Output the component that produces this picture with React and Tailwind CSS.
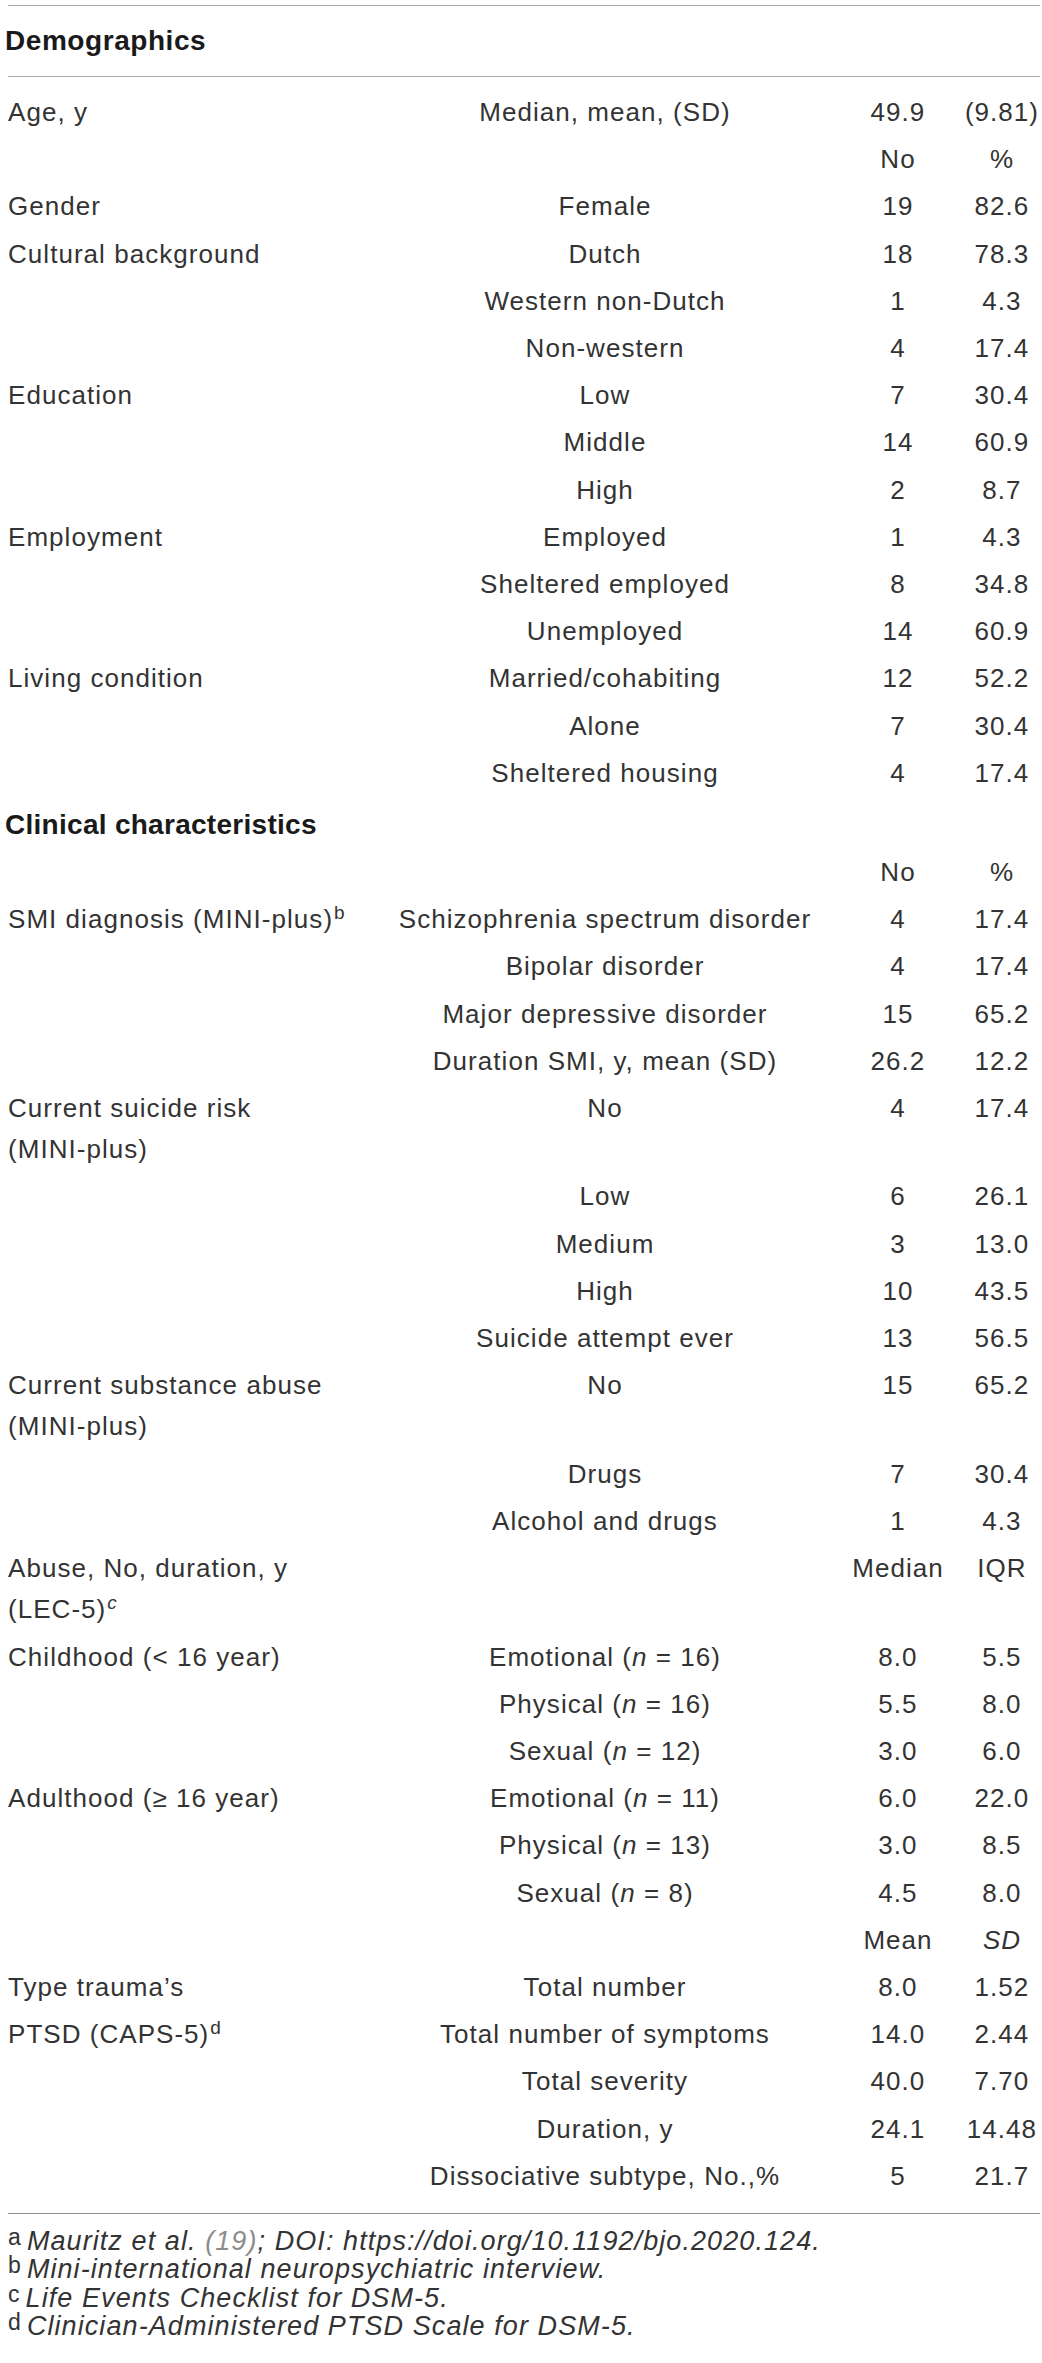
const demographics = [
  ['Age, y', 'Median, mean, (SD)', '49.9', '(9.81)'],
  ['', '', 'No', '%'],
  ['Gender', 'Female', '19', '82.6'],
  ['Cultural background', 'Dutch', '18', '78.3'],
  ['', 'Western non-Dutch', '1', '4.3'],
  ['', 'Non-western', '4', '17.4'],
  ['Education', 'Low', '7', '30.4'],
  ['', 'Middle', '14', '60.9'],
  ['', 'High', '2', '8.7'],
  ['Employment', 'Employed', '1', '4.3'],
  ['', 'Sheltered employed', '8', '34.8'],
  ['', 'Unemployed', '14', '60.9'],
  ['Living condition', 'Married/cohabiting', '12', '52.2'],
  ['', 'Alone', '7', '30.4'],
  ['', 'Sheltered housing', '4', '17.4'],
];

const Sup = ({ children, italic }) => (
  <sup className={`ml-[1px] text-[19px] ${italic ? 'italic' : ''}`}>{children}</sup>
);

const N = ({ label, n }) => (
  <>
    {label} (<i>n</i> = {n})
  </>
);

const clinical = [
  ['', '', 'No', '%'],
  [<>SMI diagnosis (MINI-plus)<Sup>b</Sup></>, 'Schizophrenia spectrum disorder', '4', '17.4'],
  ['', 'Bipolar disorder', '4', '17.4'],
  ['', 'Major depressive disorder', '15', '65.2'],
  ['', 'Duration SMI, y, mean (SD)', '26.2', '12.2'],
  [<>Current suicide risk<br />(MINI-plus)</>, 'No', '4', '17.4'],
  ['', 'Low', '6', '26.1'],
  ['', 'Medium', '3', '13.0'],
  ['', 'High', '10', '43.5'],
  ['', 'Suicide attempt ever', '13', '56.5'],
  [<>Current substance abuse<br />(MINI-plus)</>, 'No', '15', '65.2'],
  ['', 'Drugs', '7', '30.4'],
  ['', 'Alcohol and drugs', '1', '4.3'],
  [<>Abuse, No, duration, y<br />(LEC-5)<Sup italic>c</Sup></>, '', 'Median', 'IQR'],
  ['Childhood (< 16 year)', <N label="Emotional" n="16" />, '8.0', '5.5'],
  ['', <N label="Physical" n="16" />, '5.5', '8.0'],
  ['', <N label="Sexual" n="12" />, '3.0', '6.0'],
  ['Adulthood (≥ 16 year)', <N label="Emotional" n="11" />, '6.0', '22.0'],
  ['', <N label="Physical" n="13" />, '3.0', '8.5'],
  ['', <N label="Sexual" n="8" />, '4.5', '8.0'],
  ['', '', 'Mean', <i>SD</i>],
  ['Type trauma’s', 'Total number', '8.0', '1.52'],
  [<>PTSD (CAPS-5)<Sup>d</Sup></>, 'Total number of symptoms', '14.0', '2.44'],
  ['', 'Total severity', '40.0', '7.70'],
  ['', 'Duration, y', '24.1', '14.48'],
  ['', 'Dissociative subtype, No.,%', '5', '21.7'],
];

function Row({ cells }) {
  const [label, item, a, b] = cells;
  return (
    <div className="grid grid-cols-[370px_454px_132px_76px] items-start py-[3px] leading-[41.2px]">
      <div className="whitespace-nowrap">{label}</div>
      <div className="text-center whitespace-nowrap">{item}</div>
      <div className="text-center">{a}</div>
      <div className="text-center">{b}</div>
    </div>
  );
}

const notes = [
  ['a', <>Mauritz et al. <span className="text-[#8c8c8c]">(19)</span>; DOI: https://doi.org/10.1192/bjo.2020.124.</>],
  ['b', 'Mini-international neuropsychiatric interview.'],
  ['c', 'Life Events Checklist for DSM-5.'],
  ['d', 'Clinician-Administered PTSD Scale for DSM-5.'],
];

export default function App() {
  return (
    <div className="min-h-[2363px] bg-white font-['Liberation_Sans',Arial,sans-serif] text-[#333]">
      <div className="ml-[8px] w-[1032px] pt-[5px]">
        <div className="border-t border-[#a8a8a8]" />
        <div className="flex h-[71px] items-center border-b border-[#a8a8a8]">
          <h2 className="-ml-[3px] text-[28px] font-bold tracking-[0.02em] text-[#1a1a1a]">Demographics</h2>
        </div>

        <div className="pt-[12px] text-[26px] tracking-[0.04em]">
          {demographics.map((r, i) => (
            <Row key={i} cells={r} />
          ))}

          <div className="flex h-[52px] items-center pt-[4px]">
            <h2 className="-ml-[3px] text-[28px] font-bold tracking-[0.01em] text-[#1a1a1a]">Clinical characteristics</h2>
          </div>

          {clinical.map((r, i) => (
            <Row key={i} cells={r} />
          ))}
        </div>

        <div className="mt-[13px] border-t border-[#8f8f8f]" />

        <div className="pt-[13px] text-[27px] tracking-[0.04em]">
          {notes.map(([m, t]) => (
            <p key={m} className="flex items-start leading-[28.5px] whitespace-nowrap">
              <span className="mr-[5px] text-[23px] leading-[20px]">{m}</span>
              <span className="italic">{t}</span>
            </p>
          ))}
        </div>
      </div>
    </div>
  );
}
